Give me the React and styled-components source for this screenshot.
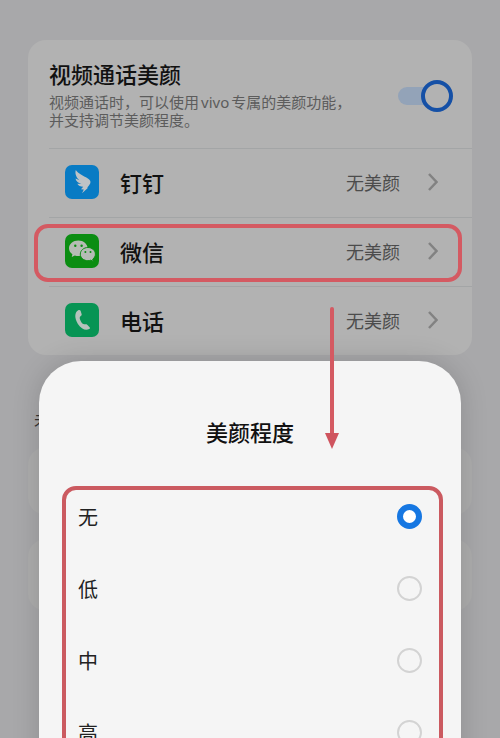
import styled, { createGlobalStyle } from "styled-components";

const GlobalStyle = createGlobalStyle`
  *,
  *::before,
  *::after {
    box-sizing: border-box;
  }

  body {
    margin: 0;
    background: #a8a8aa;
    font-family: "Noto Sans CJK SC", sans-serif;
  }

  button,
  input {
    font: inherit;
    margin: 0;
  }
`;

const Page = styled.main`
  position: relative;
  height: 100vh;
  overflow: hidden;
  padding: 40px 28px 0;
`;

const Card = styled.section`
  background: #b2b2b2;
  border-radius: 18px;
`;

const Header = styled.label`
  display: flex;
  align-items: center;
  justify-content: space-between;
  height: 108px;
  padding: 4px 19px 0 21px;
`;

const HeaderText = styled.div`
  padding-bottom: 4px;
`;

const Title = styled.h1`
  margin: 0 0 6px;
  font-size: 22px;
  line-height: 28px;
  font-weight: 500;
  color: #111;
`;

const Desc = styled.p`
  margin: 0;
  font-size: 15px;
  line-height: 18px;
  color: #5c5c5c;
`;

const Brand = styled.span`
  margin: 0 2px;
  font-family: "Noto Sans", sans-serif;
`;

const Switch = styled.input`
  appearance: none;
  flex: none;
  position: relative;
  width: 55px;
  height: 32px;

  &::before {
    content: "";
    position: absolute;
    top: 7px;
    left: 0;
    width: 40px;
    height: 18px;
    border-radius: 9px;
    background: #93a3b8;
  }

  &::after {
    content: "";
    position: absolute;
    top: 0;
    right: 0;
    width: 32px;
    height: 32px;
    border: 4px solid #1550a6;
    border-radius: 50%;
    background: #b2b2b2;
  }
`;

const AppRow = styled.div`
  position: relative;
  padding-left: 21px;
`;

const AppButton = styled.button`
  display: flex;
  align-items: center;
  width: 100%;
  height: 69px;
  padding: 0 34px 2px 16px;
  border: 0;
  border-top: 1px solid #a3a5a6;
  background: none;
  text-align: left;
`;

const AppName = styled.span`
  flex: 1;
  margin-left: 21px;
  font-size: 22px;
  font-weight: 500;
  color: #111;
`;

const Value = styled.span`
  margin-right: 28px;
  font-size: 18px;
  color: #4c4c4c;
`;

const RowMark = styled.span`
  position: absolute;
  inset: 7px 10px 4px 6px;
  border: 4px solid #d45a62;
  border-radius: 14px;
  pointer-events: none;
`;

const GroupLabel = styled.h2`
  margin: 52px 6px 16px;
  font-size: 16px;
  line-height: 24px;
  font-weight: 400;
  color: #333;
`;

const BlankCard = styled(Card)`
  height: ${(prop) => prop.$height + "px"};
  margin-bottom: 24px;
  background: #adadad;
`;

const Sheet = styled.section`
  position: absolute;
  top: 361px;
  left: 39px;
  right: 39px;
  padding: 54px 18px 24px;
  border-radius: 42px 42px 0 0;
  background: #f5f5f5;
  box-shadow: 0 0 28px rgba(0, 0, 0, 0.16);
`;

const SheetTitle = styled.h2`
  margin: 0;
  font-size: 22px;
  line-height: 32px;
  font-weight: 500;
  text-align: center;
  color: #111;
`;

const Options = styled.fieldset`
  min-width: 0;
  margin: 39px 0 0 5px;
  padding: 0 17px 0 12px;
  border: 4px solid #cb5a60;
  border-radius: 14px;
`;

const Option = styled.label`
  display: flex;
  align-items: center;
  justify-content: space-between;
  height: 72px;
  font-size: 20px;
  color: #222;

  &:first-child {
    margin-top: -10px;
  }
`;

const Radio = styled.input`
  appearance: none;
  width: 25px;
  height: 25px;
  border: 2px solid #d3d3d3;
  border-radius: 50%;

  &:checked {
    border: 6px solid #1677e2;
    background: #fff;
  }
`;

const Arrow = styled.svg`
  position: absolute;
  top: -54px;
  right: 121px;
`;

const DingTalk = () => (
  <svg width="34" height="34" viewBox="0 0 34 34" aria-hidden="true">
    <rect width="34" height="34" rx="7" fill="#087bc4" />
    <path
      d="M10.8 5C13 8.500 18.500 11 22.500 13.200C25.200 14.800 26 16.500 25.200 18.500C24.500 20 23.500 21.300 22.300 22.500L22.800 23L17 28.300L18.800 24.600L16 24.300L18.200 21.700C15.500 21.600 13.300 20.700 12.300 18.800L16.300 19C13 18 10.800 16 10.500 13.600L14.500 15.200C11.500 12.800 9.600 8.800 10.800 5Z"
      fill="#bec3c6"
    />
  </svg>
);

const WeChat = () => (
  <svg width="34" height="34" viewBox="0 0 34 34" aria-hidden="true">
    <rect width="34" height="34" rx="7" fill="#0b8d12" />
    <path
      d="M13.300 6.500C8.100 6.500 4 10 4 14.300C4 16.700 5.300 18.900 7.400 20.300L6.700 23L9.800 21.500C11 21.900 12.300 22 13.600 22C18.700 22 22.600 18.500 22.600 14.300C22.600 10 18.400 6.500 13.300 6.500Z"
      fill="#b5bcb5"
    />
    <path
      d="M22.900 13.500C18.700 13.500 15.300 16.500 15.300 20.100C15.300 23.800 18.700 26.700 22.900 26.700C23.900 26.700 24.900 26.500 25.800 26.200L28.300 27.500L27.700 25.200C29.400 24 30.400 22.200 30.400 20.100C30.400 16.500 27 13.500 22.900 13.500Z"
      fill="#b5bcb5"
      stroke="#0b8d12"
      strokeWidth="1"
    />
    <g fill="#0b8d12">
      <circle cx="10.300" cy="11.800" r="1.200" />
      <circle cx="16.600" cy="11.800" r="1.200" />
      <circle cx="20.400" cy="18" r="1" />
      <circle cx="25.500" cy="18" r="1" />
    </g>
  </svg>
);

const Phone = () => (
  <svg width="34" height="34" viewBox="0 0 34 34" aria-hidden="true">
    <rect width="34" height="34" rx="7" fill="#079454" />
    <path
      d="M13.200 7.300C14.300 6.700 15.300 7 15.700 8.100L16.600 11C16.900 12.100 16.500 12.700 15.500 13.300C14.200 14.200 14.700 16 15.700 18C16.800 20.200 18 21.400 19.600 21.300C20.700 21.200 21.400 21 22.200 21.700L24.400 23.900C25.200 24.700 25.100 25.600 24.200 26.100C20.500 28.200 16.200 25.700 12.900 20.900C9.500 15.500 9.300 9.600 13.200 7.300Z"
      fill="#b6c2bc"
    />
  </svg>
);

const Chevron = () => (
  <svg width="10" height="20" viewBox="0 0 10 20" aria-hidden="true">
    <path
      d="M1 2L8.500 10L1 18"
      fill="none"
      stroke="#828282"
      strokeWidth="2.500"
    />
  </svg>
);

const apps = [
  { name: "钉钉", Icon: DingTalk },
  { name: "微信", Icon: WeChat, marked: true },
  { name: "电话", Icon: Phone },
];

const levels = ["无", "低", "中", "高"];

const App = () => {
  return (
    <Page>
      <GlobalStyle />

      <Card>
        <Header>
          <HeaderText>
            <Title>视频通话美颜</Title>
            <Desc>
              视频通话时{"\uff0c"}可以使用<Brand>vivo</Brand>专属的美颜功能
              {"\uff0c"}
              <br />
              并支持调节美颜程度。
            </Desc>
          </HeaderText>
          <Switch type="checkbox" role="switch" defaultChecked />
        </Header>

        {apps.map(({ name, Icon, marked }) => (
          <AppRow key={name}>
            <AppButton type="button">
              <Icon />
              <AppName>{name}</AppName>
              <Value>无美颜</Value>
              <Chevron />
            </AppButton>
            {marked && <RowMark />}
          </AppRow>
        ))}
      </Card>

      <GroupLabel>未</GroupLabel>
      <BlankCard $height={68} />
      <BlankCard $height={72} />

      <Sheet>
        <SheetTitle id="level-title">美颜程度</SheetTitle>
        <Options aria-labelledby="level-title">
          {levels.map((level, i) => (
            <Option key={level}>
              {level}
              <Radio type="radio" name="level" defaultChecked={i === 0} />
            </Option>
          ))}
        </Options>
        <Arrow width="16" height="144" viewBox="0 0 16 144" aria-hidden="true">
          <path d="M8 2V130" stroke="#d45a62" strokeWidth="4" strokeLinecap="round" />
          <path d="M1 126H15L8 142Z" fill="#cf545e" />
        </Arrow>
      </Sheet>
    </Page>
  );
};

export default App;
